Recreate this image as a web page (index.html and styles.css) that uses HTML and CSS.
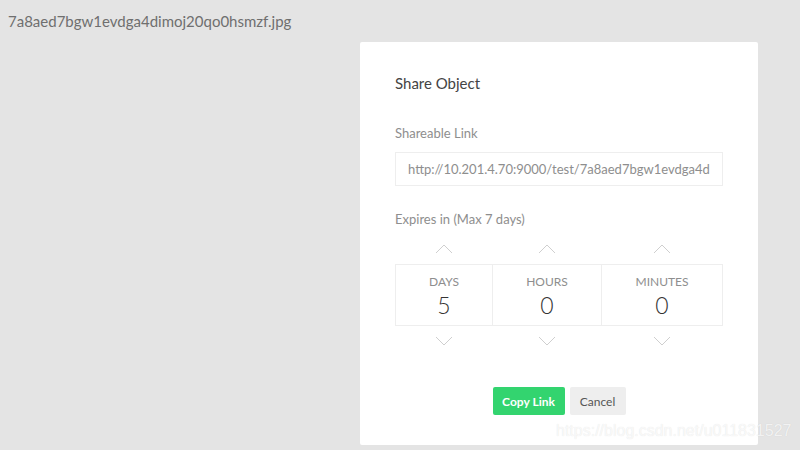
FILE: index.html
```html
<!DOCTYPE html>
<html lang="en">
<head>
    <meta charset="UTF-8">
    <meta name="viewport" content="width=device-width, initial-scale=1.0">
    <title>Share Object</title>
    <link rel="stylesheet" href="styles.css">
</head>
<body>
    <div class="filename">7a8aed7bgw1evdga4dimoj20qo0hsmzf.jpg</div>

    <div class="stage">
        <div class="modal">
            <h4 class="modal-title">Share Object</h4>

            <label class="field-label" for="shareLink">Shareable Link</label>
            <input class="share-input" id="shareLink" type="text" readonly
                   value="http://10.201.4.70:9000/test/7a8aed7bgw1evdga4dimoj20qo0hsmzf.jpg">

            <div class="field-label expires-label">Expires in (Max 7 days)</div>

            <div class="timer">
                <div class="timer-col">
                    <button class="arrow up"><svg width="18" height="10" viewBox="0 0 18 10"><path d="M1 9 L9 1 L17 9"/></svg></button>
                    <div class="cell">
                        <span class="unit">DAYS</span>
                        <span class="value">5</span>
                    </div>
                    <button class="arrow down"><svg width="18" height="10" viewBox="0 0 18 10"><path d="M1 1 L9 9 L17 1"/></svg></button>
                </div>
                <div class="timer-col">
                    <button class="arrow up"><svg width="18" height="10" viewBox="0 0 18 10"><path d="M1 9 L9 1 L17 9"/></svg></button>
                    <div class="cell">
                        <span class="unit">HOURS</span>
                        <span class="value">0</span>
                    </div>
                    <button class="arrow down"><svg width="18" height="10" viewBox="0 0 18 10"><path d="M1 1 L9 9 L17 1"/></svg></button>
                </div>
                <div class="timer-col">
                    <button class="arrow up"><svg width="18" height="10" viewBox="0 0 18 10"><path d="M1 9 L9 1 L17 9"/></svg></button>
                    <div class="cell last">
                        <span class="unit">MINUTES</span>
                        <span class="value">0</span>
                    </div>
                    <button class="arrow down"><svg width="18" height="10" viewBox="0 0 18 10"><path d="M1 1 L9 9 L17 1"/></svg></button>
                </div>
            </div>

            <div class="modal-footer">
                <button class="btn btn-copy">Copy Link</button>
                <button class="btn btn-cancel">Cancel</button>
            </div>
        </div>
    </div>

    <div class="watermark">https://blog.csdn.net/u011831527</div>
</body>
</html>
```

FILE: styles.css
```css
* {
    margin: 0;
    padding: 0;
    box-sizing: border-box;
}

body {
    background: #e4e4e4;
    font-family: Lato, "Open Sans", sans-serif;
    height: 450px;
    overflow: hidden;
    position: relative;
}

.filename {
    padding: 11px 0 0 8px;
    font-size: 15px;
    line-height: 20px;
    color: #6f6f6f;
}

.stage {
    padding: 11px 0 0 360px;
}

.modal {
    width: 398px;
    height: 403px;
    background: #fff;
    border-radius: 2px;
    padding: 31px 35px 0;
}

.modal-title {
    font-size: 15px;
    line-height: 20px;
    font-weight: normal;
    color: #444;
    margin-bottom: 32px;
}

.field-label {
    display: block;
    font-size: 13px;
    line-height: 16px;
    color: #8e8e8e;
    margin-bottom: 11px;
}

.share-input {
    display: block;
    width: 328px;
    height: 34px;
    border: 1px solid #eee;
    padding: 0 12px;
    font-family: Lato, "Open Sans", sans-serif;
    font-size: 13px;
    color: #8e8e8e;
    outline: none;
    margin-bottom: 25px;
}

.expires-label {
    margin-bottom: 7px;
}

.timer {
    display: grid;
    grid-template-columns: 97px 109px 122px;
}

.timer-col {
    display: flex;
    flex-direction: column;
    align-items: stretch;
}

.arrow {
    height: 30px;
    background: none;
    border: none;
    display: flex;
    align-items: center;
    justify-content: center;
    cursor: pointer;
}

.arrow svg path {
    fill: none;
    stroke: #cfcfcf;
    stroke-width: 1;
}

.cell {
    height: 62px;
    border: 1px solid #eee;
    border-right: none;
    display: flex;
    flex-direction: column;
    align-items: center;
    padding-top: 9px;
}

.cell.last {
    border-right: 1px solid #eee;
}

.unit {
    font-size: 12px;
    line-height: 16px;
    color: #8e8e8e;
}

.value {
    font-size: 23px;
    font-weight: 300;
    line-height: 28px;
    color: #333;
    margin-top: 1px;
}

.modal-footer {
    display: flex;
    justify-content: center;
    gap: 5px;
    margin-top: 31px;
}

.btn {
    height: 28px;
    border: none;
    border-radius: 2px;
    font-family: Lato, "Open Sans", sans-serif;
    font-size: 12px;
    cursor: pointer;
}

.btn-copy {
    width: 72px;
    background: #33d46f;
    color: #fff;
    font-weight: bold;
}

.btn-cancel {
    width: 56px;
    background: #eee;
    color: #555;
}

.watermark {
    position: absolute;
    left: 556px;
    top: 421px;
    font-family: "Liberation Sans", Arial, sans-serif;
    font-size: 16px;
    line-height: 20px;
    color: rgba(255, 255, 255, 0.75);
    text-shadow: 0 0 1px rgba(0, 0, 0, 0.12);
    white-space: nowrap;
}
```
